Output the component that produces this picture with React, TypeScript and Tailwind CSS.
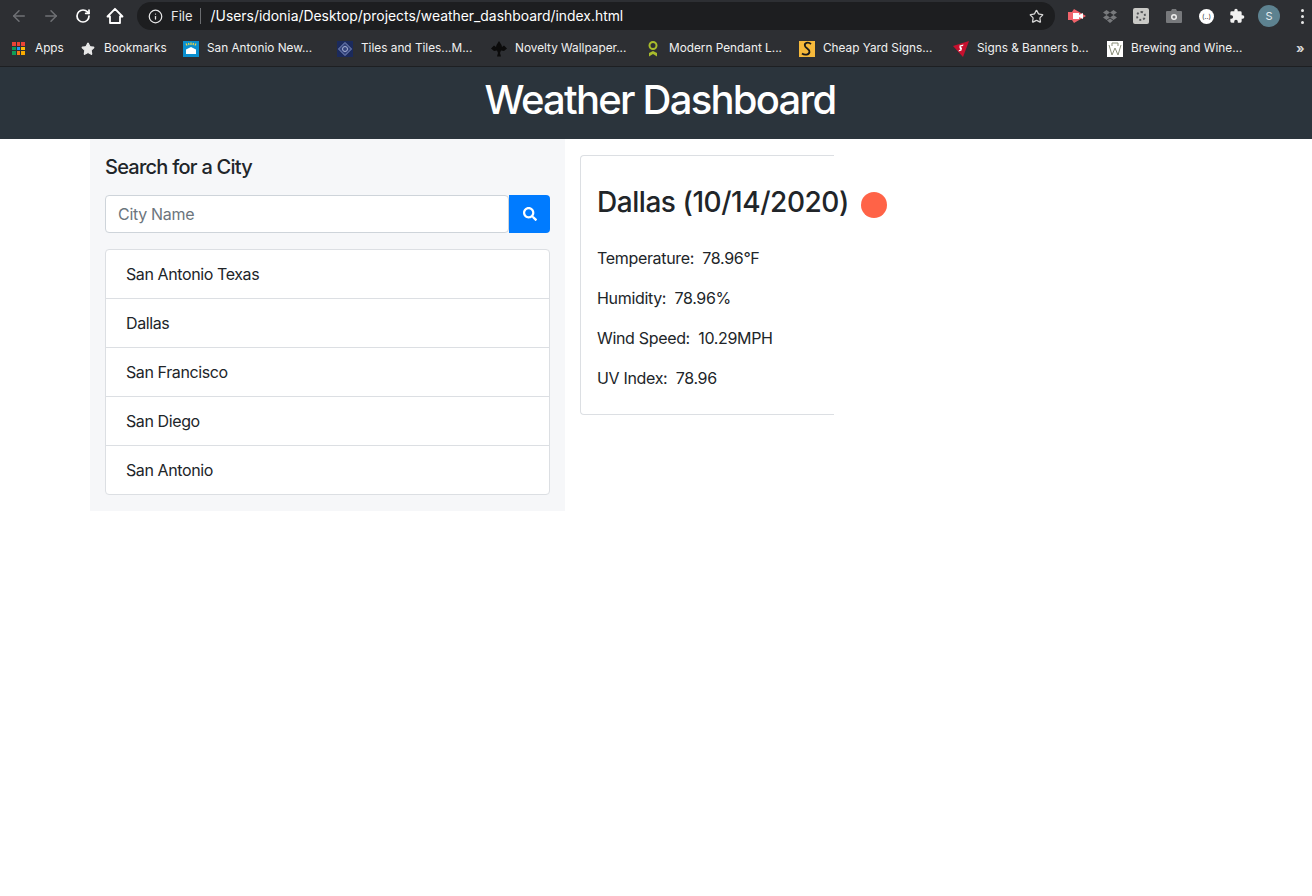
import { ArrowLeft, ArrowRight, Info, RotateCw, Star } from "lucide-react";
import { FaSearch } from "react-icons/fa";

const cities = ["San Antonio Texas", "Dallas", "San Francisco", "San Diego", "San Antonio"];

const stats = ["Temperature:  78.96°F", "Humidity:  78.96%", "Wind Speed:  10.29MPH", "UV Index:  78.96"];

function AppsIcon() {
  const colors = ["#ea4335", "#ea4335", "#ea4335", "#0f9d58", "#2196f3", "#fbbc05", "#0f9d58", "#fa7b17", "#f9ab00"];
  return (
    <div className="grid h-[13px] w-[13px] grid-cols-3 gap-[1px]">
      {colors.map((c, i) => (
        <span key={i} style={{ backgroundColor: c }} />
      ))}
    </div>
  );
}

function NewsIcon() {
  return (
    <svg width="16" height="16" viewBox="0 0 16 16">
      <rect width="16" height="16" fill="#0a8fcf" />
      <path d="M3 8.500L8 6l5 2.500V13H3z" fill="#fff" />
      <path d="M3 2.500l1 2M8 1.500v2.500M13 2.500l-1 2M5.500 2l.5 2M10.500 2l-.5 2" stroke="#f5d442" strokeWidth="1.200" />
    </svg>
  );
}

function TilesIcon() {
  return (
    <svg width="16" height="16" viewBox="0 0 16 16">
      <rect width="16" height="16" fill="#1b2a5c" />
      <path d="M8 1.500L14.500 8 8 14.500 1.500 8z" fill="#34447c" stroke="#7f8fc0" strokeWidth="1" />
      <circle cx="8" cy="8" r="2.500" fill="none" stroke="#a9b4d6" />
    </svg>
  );
}

function FleurIcon() {
  return (
    <svg width="16" height="16" viewBox="0 0 16 16">
      <path d="M8 0l2.500 4 .5 2 2-1.500L16 7.500l-3 2.500-3-.5-1 2.500 1 3.500H6l1-3.500-1-2.500-3 .5-3-2.500 3-3L5 6l.5-2z" fill="#0b0b0b" />
    </svg>
  );
}

function PendantIcon() {
  return (
    <svg width="16" height="16" viewBox="0 0 16 16">
      <circle cx="8" cy="4.500" r="3.500" fill="none" stroke="#a8bb2c" strokeWidth="2" />
      <path d="M4 15.500V12l4-2 4 2v3.500L8 13z" fill="#a8bb2c" />
    </svg>
  );
}

function YardIcon() {
  return (
    <svg width="16" height="16" viewBox="0 0 16 16">
      <rect width="16" height="16" fill="#f6b93b" />
      <path d="M12 3C9 0.500 5 2 6 5c.8 2.500 5 3 4.500 6C10 14 5.500 14.500 3 12.500" fill="none" stroke="#1a1a1a" strokeWidth="1.800" />
    </svg>
  );
}

function BannerIcon() {
  return (
    <svg width="16" height="16" viewBox="0 0 16 16">
      <path d="M0 5l16-5-6 16z" fill="#c8102e" />
      <path d="M6.500 4.500l4-1-.5 1.500-2.500.5 1.500 1.500-.5 2.500-3 1 .5-1.500 1.500-.5-1-1.500z" fill="#fff" />
    </svg>
  );
}

function BrewingIcon() {
  return (
    <svg width="16" height="16" viewBox="0 0 16 16">
      <rect width="16" height="16" fill="#fff" />
      <path d="M2 4l3 10 3-7 3 7 3-10M5 5V2h6v3" fill="none" stroke="#8a8f7a" strokeWidth="1" />
    </svg>
  );
}

const bookmarks = [
  { label: "San Antonio New...", icon: <NewsIcon /> },
  { label: "Tiles and Tiles...M...", icon: <TilesIcon /> },
  { label: "Novelty Wallpaper...", icon: <FleurIcon /> },
  { label: "Modern Pendant L...", icon: <PendantIcon /> },
  { label: "Cheap Yard Signs...", icon: <YardIcon /> },
  { label: "Signs & Banners b...", icon: <BannerIcon /> },
  { label: "Brewing and Wine...", icon: <BrewingIcon /> },
];

function BrowserChrome() {
  return (
    <div className="h-[67px] border-b border-[#1d1f22] bg-[#2d2f33] font-['Inter',sans-serif] text-white">
      <div className="flex h-[32px] items-center pl-[10px]">
        <ArrowLeft size={18} className="text-[#6f7175]" />
        <ArrowRight size={18} className="ml-[14px] text-[#6f7175]" />
        <RotateCw size={16} strokeWidth={2.600} className="ml-[15px] text-white" />
        <svg width="18" height="18" viewBox="0 0 18 18" className="ml-[15px]">
          <path d="M9 1.800L16.500 9.500H14V16H4V9.500H1.500z" fill="none" stroke="#fff" strokeWidth="1.800" strokeLinejoin="round" />
        </svg>
        <div className="ml-[13px] flex h-[28px] w-[918px] items-center rounded-full bg-[#1d1e20] pl-[11px] pr-[11px]">
          <Info size={15} className="text-[#e8e8e8]" />
          <span className="ml-[8px] pt-[1px] text-[13px] text-[#e8e8e8]">File</span>
          <span className="ml-[7px] h-[16px] w-px bg-[#6b6d70]" />
          <span className="ml-[10px] text-[13.900px] text-white">/Users/idonia/Desktop/projects/weather_dashboard/index.html</span>
          <Star size={15} className="ml-auto text-[#d6d6d6]" />
        </div>
        <svg width="18" height="14" viewBox="0 0 18 14" className="ml-[13px]">
          <path d="M0 3h4l2-3 12 7-12 7-2-3H0z" fill="#f0636b" />
          <path d="M5 4h6v6H5zM11 6l4-2v6l-4-2z" fill="#fff" />
        </svg>
        <svg width="14" height="14" viewBox="0 0 14 14" className="ml-[17px]">
          <path d="M3.500 1L7 3.500 3.500 6 0 3.500zM10.500 1L14 3.500 10.500 6 7 3.500zM3.500 6L7 8.500 3.500 11 0 8.500zM10.500 6L14 8.500 10.500 11 7 8.500zM7 9.500L10 11.500 7 14 4 11.500z" fill="#77797c" />
        </svg>
        <div className="ml-[16px] flex h-[16px] w-[16px] items-center justify-center rounded-[2px] bg-[#c9c9c6]">
          <div className="h-[10px] w-[10px] rounded-full border-2 border-dotted border-[#55575a]" />
        </div>
        <svg width="16" height="14" viewBox="0 0 16 14" className="ml-[17px]">
          <path d="M1 2h4l1-2h4l1 2h4a1 1 0 011 1v10a1 1 0 01-1 1H1a1 1 0 01-1-1V3a1 1 0 011-1z" fill="#77797c" />
          <circle cx="8" cy="8" r="3" fill="#eee" />
          <circle cx="8" cy="8" r="1.500" fill="#77797c" />
        </svg>
        <div className="ml-[17px] flex h-[15px] w-[15px] items-center justify-center rounded-full bg-white text-[7px] leading-none text-[#333]">(..)</div>
        <svg width="16" height="16" viewBox="0 0 24 24" className="ml-[15px]" fill="#f1f1f1">
          <path d="M20.500 11H19V7a2 2 0 00-2-2h-4V3.500a2.500 2.500 0 00-5 0V5H4a2 2 0 00-2 2v3.800h1.500a2.700 2.700 0 010 5.400H2V20a2 2 0 002 2h3.800v-1.500a2.700 2.700 0 015.400 0V22H17a2 2 0 002-2v-4h1.500a2.500 2.500 0 000-5z" />
        </svg>
        <div className="ml-[13px] flex h-[22px] w-[22px] items-center justify-center rounded-full bg-[#5d8290] text-[11px] text-[#e8eef0]">S</div>
        <div className="ml-[21px] flex flex-col gap-[3px]">
          <span className="h-[3px] w-[3px] rounded-full bg-[#e8e8e8]" />
          <span className="h-[3px] w-[3px] rounded-full bg-[#e8e8e8]" />
          <span className="h-[3px] w-[3px] rounded-full bg-[#e8e8e8]" />
        </div>
      </div>
      <div className="flex h-[33px] items-center pl-[12px] text-[11.800px] text-[#f1f1f1]">
        <div className="flex w-[69px] items-center gap-[10px]">
          <AppsIcon />
          <span>Apps</span>
        </div>
        <div className="flex w-[102px] items-center gap-[9px]">
          <Star size={14} fill="#e8e8e8" className="text-[#e8e8e8]" />
          <span>Bookmarks</span>
        </div>
        {bookmarks.map((b) => (
          <div key={b.label} className="flex w-[154px] shrink-0 items-center gap-[8px] whitespace-nowrap">
            {b.icon}
            <span>{b.label}</span>
          </div>
        ))}
        <span className="ml-[35px] text-[13px] font-bold text-[#d8d8d8]">»</span>
      </div>
    </div>
  );
}

export default function App() {
  return (
    <div className="min-h-[896px] bg-white font-['Inter',sans-serif] text-[#212529]">
      <BrowserChrome />
      <header className="flex h-[72px] items-center justify-center bg-[#2b343c] pb-[6px] pl-[8px]">
        <h1 className="text-[40px] font-medium tracking-[-1.750px] text-white">Weather Dashboard</h1>
      </header>
      <main className="flex items-start pl-[90px]">
        <aside className="w-[475px] bg-[#f6f7f9] p-[16px] px-[15px]">
          <h2 className="text-[20px] font-medium leading-[24px] tracking-[-0.750px]">Search for a City</h2>
          <div className="mt-[16px] flex h-[38px]">
            <input
              placeholder="City Name"
              className="min-w-0 flex-1 rounded-[4px] border border-[#ced4da] bg-white px-[12px] text-[16px] tracking-[-0.300px] placeholder:text-[#6c757d]"
            />
            <button className="flex w-[41px] items-center justify-center rounded-r-[4px] bg-[#007bff]">
              <FaSearch size={14} className="text-white" />
            </button>
          </div>
          <ul className="mt-[16px] rounded-[4px] border border-[#dcdfe3] bg-white">
            {cities.map((city, i) => (
              <li
                key={city}
                className={`flex items-center px-[20px] text-[16px] tracking-[-0.400px] ${i > 0 ? "h-[49px] border-t border-[#dcdfe3]" : "h-[48px]"}`}
              >
                {city}
              </li>
            ))}
          </ul>
        </aside>
        <section className="ml-[15px] mt-[16px] h-[260px] w-[254px] rounded-l-[4px] border-y border-l border-[#dcdfe3] pl-[16px] pt-[24px]">
          <div className="flex items-center whitespace-nowrap">
            <h2 className="text-[28px] font-medium leading-[44px] tracking-[-0.450px]">Dallas (10/14/2020)</h2>
            <span className="ml-[12px] mt-[6px] h-[26px] w-[26px] shrink-0 rounded-full bg-[#ff6347]" />
          </div>
          <div className="mt-[22px] flex flex-col gap-[16px]">
            {stats.map((s) => (
              <p key={s} className="whitespace-pre text-[16px] leading-[24px] tracking-[-0.330px]">
                {s}
              </p>
            ))}
          </div>
        </section>
      </main>
    </div>
  );
}
